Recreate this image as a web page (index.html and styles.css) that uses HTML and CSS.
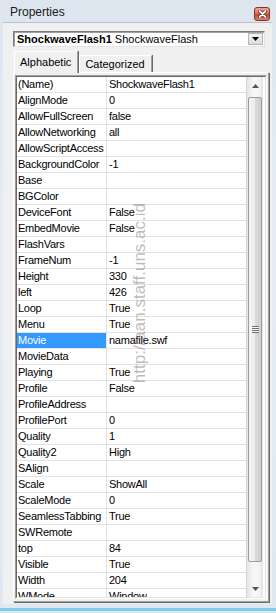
FILE: index.html
```html
<!DOCTYPE html>
<html>
<head>
    <title>Properties</title>
    <link rel="stylesheet" href="styles.css">
</head>
<body>
    <div class="window">
        <div class="titlebar">
            <span class="title">Properties</span>
            <span class="close">
                <svg width="9" height="8" viewBox="0 0 9 8"><path d="M1.5 1 L7.5 7 M7.5 1 L1.5 7" stroke="#5a1a10" stroke-width="3.2" stroke-linecap="round"/><path d="M1.5 1 L7.5 7 M7.5 1 L1.5 7" stroke="#fff" stroke-width="1.8" stroke-linecap="round"/></svg>
            </span>
        </div>

        <div class="panel">
            <div class="combo">
                <span class="combo-text"><b>ShockwaveFlash1</b> ShockwaveFlash</span>
                <span class="combo-btn">
                    <svg width="7" height="4" viewBox="0 0 7 4"><path d="M0 0 H7 L3.5 4 Z" fill="#000"/></svg>
                </span>
            </div>

            <div class="tabs">
                <div class="tab active">Alphabetic</div>
                <div class="tab">Categorized</div>
            </div>

            <div class="tabpage">
                <div class="grid">
                    <div class="grid-inner">
                        <div class="rows">
                            <div class="row"><div class="name">(Name)</div><div class="value">ShockwaveFlash1</div></div>
                            <div class="row"><div class="name">AlignMode</div><div class="value">0</div></div>
                            <div class="row"><div class="name">AllowFullScreen</div><div class="value">false</div></div>
                            <div class="row"><div class="name">AllowNetworking</div><div class="value">all</div></div>
                            <div class="row"><div class="name">AllowScriptAccess</div><div class="value"></div></div>
                            <div class="row"><div class="name">BackgroundColor</div><div class="value">-1</div></div>
                            <div class="row"><div class="name">Base</div><div class="value"></div></div>
                            <div class="row"><div class="name">BGColor</div><div class="value"></div></div>
                            <div class="row"><div class="name">DeviceFont</div><div class="value">False</div></div>
                            <div class="row"><div class="name">EmbedMovie</div><div class="value">False</div></div>
                            <div class="row"><div class="name">FlashVars</div><div class="value"></div></div>
                            <div class="row"><div class="name">FrameNum</div><div class="value">-1</div></div>
                            <div class="row"><div class="name">Height</div><div class="value">330</div></div>
                            <div class="row"><div class="name">left</div><div class="value">426</div></div>
                            <div class="row"><div class="name">Loop</div><div class="value">True</div></div>
                            <div class="row"><div class="name">Menu</div><div class="value">True</div></div>
                            <div class="row selected"><div class="name">Movie</div><div class="value">namafile.swf</div></div>
                            <div class="row"><div class="name">MovieData</div><div class="value"></div></div>
                            <div class="row"><div class="name">Playing</div><div class="value">True</div></div>
                            <div class="row"><div class="name">Profile</div><div class="value">False</div></div>
                            <div class="row"><div class="name">ProfileAddress</div><div class="value"></div></div>
                            <div class="row"><div class="name">ProfilePort</div><div class="value">0</div></div>
                            <div class="row"><div class="name">Quality</div><div class="value">1</div></div>
                            <div class="row"><div class="name">Quality2</div><div class="value">High</div></div>
                            <div class="row"><div class="name">SAlign</div><div class="value"></div></div>
                            <div class="row"><div class="name">Scale</div><div class="value">ShowAll</div></div>
                            <div class="row"><div class="name">ScaleMode</div><div class="value">0</div></div>
                            <div class="row"><div class="name">SeamlessTabbing</div><div class="value">True</div></div>
                            <div class="row"><div class="name">SWRemote</div><div class="value"></div></div>
                            <div class="row"><div class="name">top</div><div class="value">84</div></div>
                            <div class="row"><div class="name">Visible</div><div class="value">True</div></div>
                            <div class="row"><div class="name">Width</div><div class="value">204</div></div>
                            <div class="row"><div class="name">WMode</div><div class="value">Window</div></div>
                        </div>
                        <div class="scrollbar">
                            <div class="arrow">
                                <svg width="7" height="4" viewBox="0 0 7 4"><path d="M0 4 H7 L3.5 0 Z" fill="#555"/></svg>
                            </div>
                            <div class="track">
                                <div class="thumb">
                                    <div class="grip"></div>
                                </div>
                            </div>
                            <div class="arrow">
                                <svg width="7" height="4" viewBox="0 0 7 4"><path d="M0 0 H7 L3.5 4 Z" fill="#555"/></svg>
                            </div>
                        </div>
                    </div>
                </div>
            </div>
        </div>

        <div class="watermark">http://aan.staff.uns.ac.id</div>
    </div>
</body>
</html>
```

FILE: styles.css
```css
body {
    margin: 0;
    font-family: "Liberation Sans", Arial, sans-serif;
    font-size: 11px;
    color: #000;
}
.window {
    position: relative;
    width: 276px;
    height: 613px;
    background: linear-gradient(180deg, #dde6ef 0%, #e6edf4 40%, #dfe8f0 100%);
    overflow: hidden;
}
.window::after {
    content: "";
    position: absolute;
    left: 0;
    right: 0;
    bottom: 2px;
    height: 3px;
    background: #7fcde6;
}
.titlebar {
    display: flex;
    align-items: flex-start;
    height: 22px;
}
.title {
    font-size: 12px;
    color: #1a1a1a;
    margin: 5px 0 0 10px;
}
.close {
    display: flex;
    align-items: center;
    justify-content: center;
    margin: 7px 6px 0 auto;
    width: 14px;
    height: 12px;
    border: 1px solid #8a3226;
    border-radius: 3px;
    background: linear-gradient(180deg, #eaa796 0%, #d7705c 45%, #c04a32 55%, #d9836c 100%);
}
.panel {
    margin: 0 4px 0 3px;
    height: 582px;
    background: #f0f0f0;
    border-top: 1px solid #b9c3cf;
    padding: 8px 0 0 10px;
    box-sizing: border-box;
}
.combo {
    display: flex;
    align-items: center;
    width: 252px;
    height: 16px;
    box-sizing: border-box;
    background: #fff;
    border: 1px solid;
    border-color: #7a7a7a #e3e3e3 #e3e3e3 #7a7a7a;
    box-shadow: inset 1px 1px #a0a0a0;
}
.combo-text {
    flex: 1;
    padding-left: 3px;
    white-space: nowrap;
}
.combo-btn {
    display: flex;
    align-items: center;
    justify-content: center;
    width: 15px;
    height: 12px;
    margin-right: 1px;
    box-sizing: border-box;
    border: 1px solid #b5b5b5;
    background: linear-gradient(180deg, #f2f2f2, #dcdcdc);
}
.tabs {
    display: flex;
    align-items: flex-end;
    height: 21px;
    margin-top: 4px;
    padding-left: 1px;
    position: relative;
    z-index: 1;
}
.tab {
    height: 17px;
    line-height: 16px;
    padding: 0 6px 0 5px;
    box-sizing: border-box;
    background: #f0f0f0;
    border-left: 1px solid #fff;
    border-top: 1px solid #fff;
    border-right: 1px solid #a0a0a0;
    box-shadow: 1px 0 #696969;
}
.tab.active {
    height: 22px;
    line-height: 20px;
    margin-bottom: -1px;
}
.tab + .tab {
    margin-left: 1px;
}
.tabpage {
    width: 256px;
    height: 530px;
    box-sizing: border-box;
    border-left: 1px solid #fff;
    border-top: 1px solid #fff;
    border-right: 1px solid #a0a0a0;
    border-bottom: 1px solid #a0a0a0;
    box-shadow: 1px 1px #696969;
    padding: 2px 0 0 1px;
}
.grid {
    width: 250px;
    border: 1px solid;
    border-color: #a0a0a0 #fff #fff #a0a0a0;
}
.grid-inner {
    display: flex;
    height: 520px;
    overflow: hidden;
    border: 1px solid;
    border-color: #696969 #e3e3e3 #e3e3e3 #696969;
    background: #fff;
}
.rows {
    width: 229px;
    letter-spacing: -0.25px;
}
.row {
    display: flex;
    height: 16px;
    line-height: 15px;
    box-sizing: border-box;
    border-bottom: 1px solid #e2e2e2;
}
.name {
    width: 90px;
    padding-left: 1px;
    box-sizing: border-box;
    border-right: 1px solid #e2e2e2;
    white-space: nowrap;
    overflow: hidden;
}
.value {
    flex: 1;
    padding-left: 2px;
    white-space: nowrap;
}
.row.selected .name {
    background: #3399ff;
    color: #fff;
}
.scrollbar {
    display: flex;
    flex-direction: column;
    width: 17px;
    background: linear-gradient(90deg, #e4e4e4, #f7f7f7 40%, #f3f3f3 80%, #e2e2e2);
    border-left: 1px solid #d6d6d6;
    box-sizing: border-box;
}
.arrow {
    display: flex;
    align-items: center;
    justify-content: center;
    height: 17px;
}
.track {
    flex: 1;
    padding: 3px 1px 18px 1px;
}
.thumb {
    display: flex;
    align-items: center;
    justify-content: center;
    height: 100%;
    box-sizing: border-box;
    border: 1px solid #9c9c9c;
    border-radius: 2px;
    background: linear-gradient(90deg, #f4f4f4, #ececec 50%, #d8d8d8 55%, #cfcfcf);
}
.grip {
    width: 7px;
    height: 7px;
    background: repeating-linear-gradient(180deg, #6e6e6e 0 1px, #f6f6f6 1px 2px);
}
.watermark {
    position: absolute;
    left: 130px;
    top: 203px;
    writing-mode: vertical-rl;
    transform: rotate(180deg);
    font-size: 17px;
    color: rgba(120, 120, 120, 0.5);
    white-space: nowrap;
}
```
